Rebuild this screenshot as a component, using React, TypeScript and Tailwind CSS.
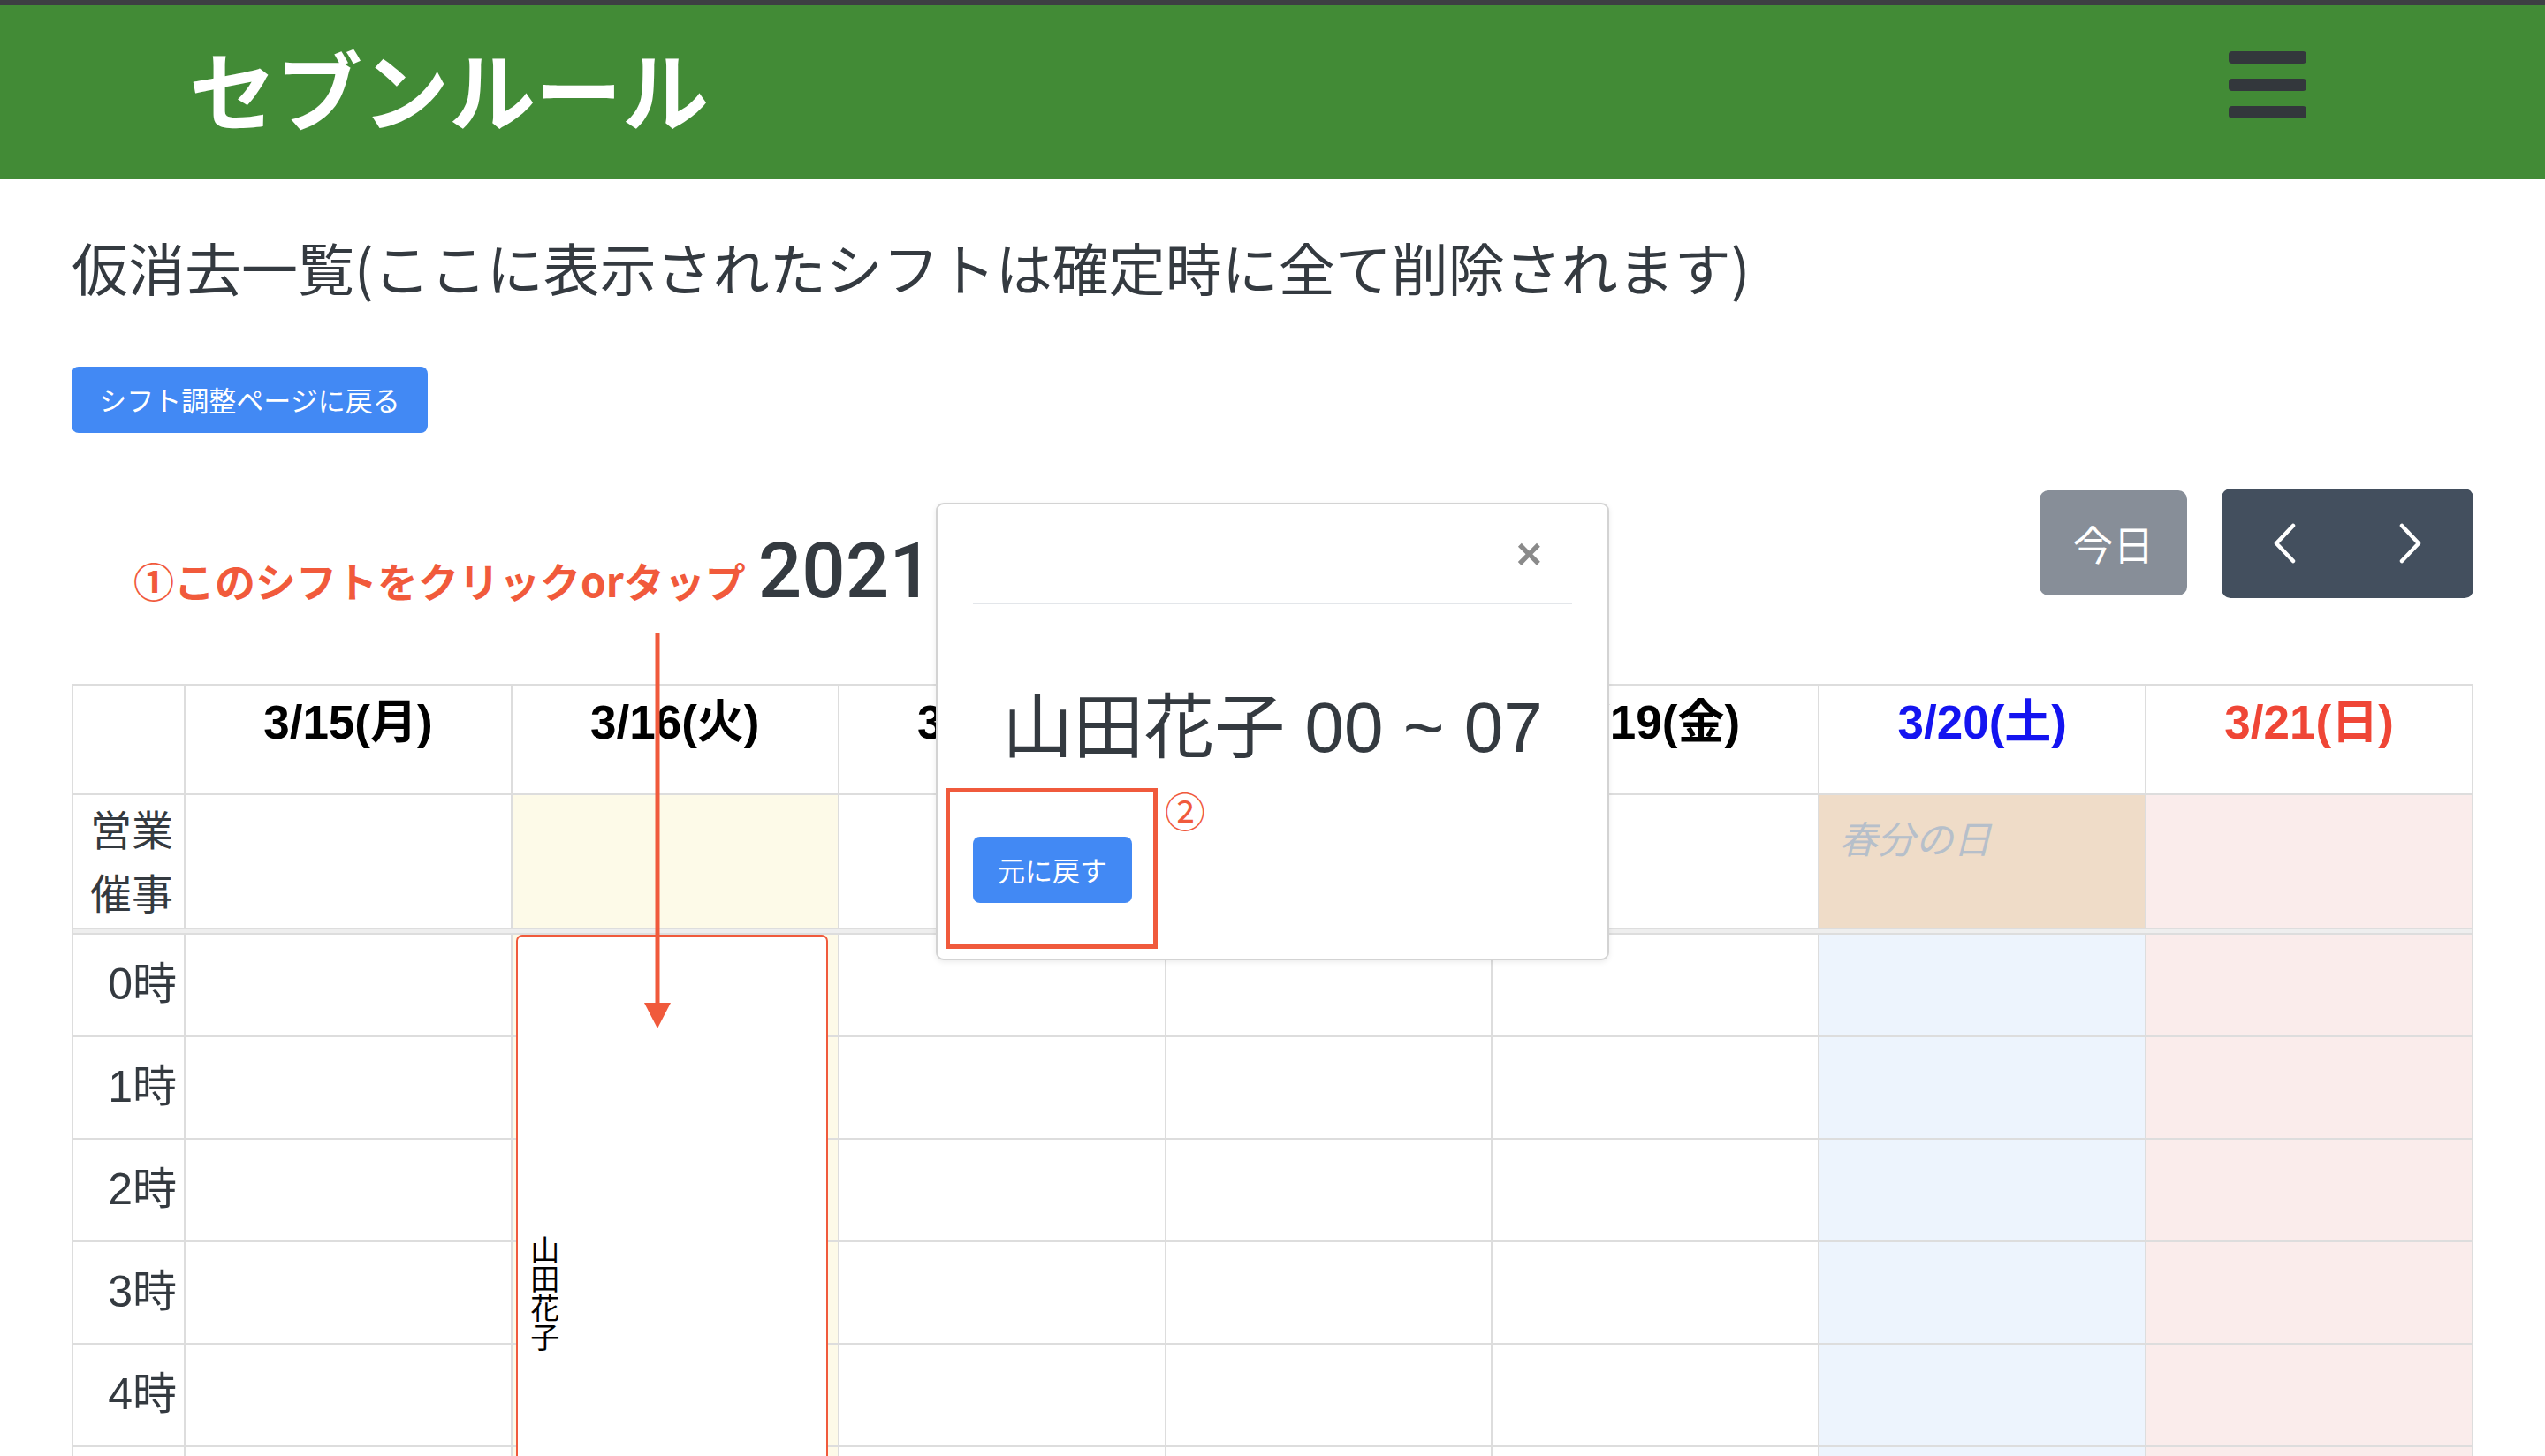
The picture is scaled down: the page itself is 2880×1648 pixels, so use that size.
import React from "react";

// 仮消去一覧 page: header, back button, weekly calendar and the open shift modal
const days = [
  { label: "3/15(月)", head: "text-black", top: "", body: "" },
  { label: "3/16(火)", head: "text-black", top: "bg-[#fdfae8]", body: "bg-[#fdfae8]" },
  { label: "3/17(水)", head: "text-black", top: "", body: "" },
  { label: "3/18(木)", head: "text-black", top: "", body: "" },
  { label: "3/19(金)", head: "text-black", top: "", body: "" },
  { label: "3/20(土)", head: "text-[#1414f0]", top: "bg-[#efdcc8]", body: "bg-[#edf4fd]", holiday: "春分の日" },
  { label: "3/21(日)", head: "text-[#ef4636]", top: "bg-[#faeceb]", body: "bg-[#faeceb]" },
];

const hours = [0, 1, 2, 3, 4, 5, 6, 7];

const cell = "border-r-2 border-b-2 border-[#dddddd]";

function Chevron({ dir }: { dir: "left" | "right" }) {
  return (
    <svg width="30" height="46" viewBox="0 0 30 46" fill="none">
      <path
        d={dir === "left" ? "M25 3 L6 23 L25 43" : "M5 3 L24 23 L5 43"}
        stroke="white"
        strokeWidth="4.5"
        strokeLinecap="round"
        strokeLinejoin="round"
      />
    </svg>
  );
}

export default function App() {
  return (
    <div className="relative min-h-screen bg-white font-['Liberation_Sans','Noto_Sans_CJK_JP',sans-serif] text-[#343a40]">
      {/* top bar + header */}
      <div className="h-[6px] bg-[#3d3e43]" />
      <header className="h-[197px] bg-[#428b36] flex items-center justify-between pl-[214px] pr-[270px]">
        <h1 className="-mt-[14px] text-white font-bold text-[98px] leading-none font-['Noto_Sans_CJK_JP',sans-serif]">
          セブンルール
        </h1>
        <button className="flex flex-col gap-[17px] w-[88px] -mt-[18px]">
          <span className="block h-[14px] rounded-[4px] bg-[#33373c]" />
          <span className="block h-[14px] rounded-[4px] bg-[#33373c]" />
          <span className="block h-[14px] rounded-[4px] bg-[#33373c]" />
        </button>
      </header>

      <main className="px-[81px]">
        <h2 className="mt-[60px] text-[64px] leading-[1.2] font-normal font-['Noto_Sans_CJK_JP',sans-serif]">
          仮消去一覧(ここに表示されたシフトは確定時に全て削除されます)
        </h2>

        <button className="mt-[75px] h-[75px] w-[403px] rounded-[8px] bg-[#4289f4] text-white text-[31px] font-['Noto_Sans_CJK_JP',sans-serif]">
          シフト調整ページに戻る
        </button>

        {/* calendar toolbar */}
        <div className="mt-[63px] h-[124px] flex justify-between items-start">
          <div className="mt-[50px] flex items-baseline gap-[14px] pl-[70px]">
            <span className="text-[46px] font-bold text-[#f15a3b] font-['Noto_Sans_CJK_JP',sans-serif] leading-none">
              ①このシフトをクリックorタップ
            </span>
            <span className="text-[87px] font-medium leading-none font-['Roboto','Noto_Sans_CJK_JP',sans-serif] whitespace-pre">
              2021   年3月
            </span>
          </div>
          <div className="flex items-center gap-[39px] h-full">
            <button className="h-[119px] w-[167px] rounded-[10px] bg-[#878e98] text-white text-[46px] font-['Noto_Sans_CJK_JP',sans-serif]">
              今日
            </button>
            <div className="flex h-[124px] w-[285px] rounded-[10px] bg-[#434f5e] overflow-hidden">
              <button className="flex-1 flex items-center justify-center">
                <Chevron dir="left" />
              </button>
              <button className="flex-1 flex items-center justify-center">
                <Chevron dir="right" />
              </button>
            </div>
          </div>
        </div>

        {/* week grid */}
        <div className="mt-[97px] border-t-2 border-l-2 border-[#dddddd] grid grid-cols-[127px_repeat(7,minmax(0,1fr))]">
          <div className={`${cell} h-[124px]`} />
          {days.map((d) => (
            <div key={d.label} className={`${cell} h-[124px] pt-[15px] text-center`}>
              <span className={`text-[53px] font-bold leading-none ${d.head}`}>{d.label}</span>
            </div>
          ))}

          <div className={`${cell} h-[152px] pl-[19px] pt-[1px] text-[47px] leading-[72px] font-['Noto_Sans_CJK_JP',sans-serif]`}>
            営業
            <br />
            催事
          </div>
          {days.map((d) => (
            <div key={d.label + "-ev"} className={`${cell} h-[152px] ${d.top} pl-[22px] pt-[15px]`}>
              {d.holiday && (
                <span className="text-[43px] italic text-[#b6bfca] leading-[1.5] font-['Noto_Sans_CJK_JP',sans-serif]">
                  {d.holiday}
                </span>
              )}
            </div>
          ))}

          <div className="col-span-8 h-[6px] bg-[#eeeeee] border-r-2 border-b-2 border-[#dddddd]" />

          {hours.map((h) => (
            <React.Fragment key={h}>
              <div className={`${cell} h-[116px] flex items-center justify-end pr-[8px] text-[50px]`}>
                {h}時
              </div>
              {days.map((d, i) => (
                <div key={d.label + h} className={`${cell} h-[116px] relative ${d.body}`}>
                  {h === 0 && i === 1 && (
                    <div className="absolute left-[4px] top-0 z-10 w-[353px] h-[812px] rounded-[7px] border-2 border-[#f05a3c] bg-white flex items-center pl-[14px]">
                      <span className="[writing-mode:vertical-rl] text-[33px] leading-none text-black font-['Noto_Sans_CJK_JP',sans-serif]">
                        山田花子
                      </span>
                    </div>
                  )}
                </div>
              ))}
            </React.Fragment>
          ))}
        </div>
      </main>

      {/* annotation arrow */}
      <svg className="absolute left-[729px] top-[717px] z-20" width="30" height="448" viewBox="0 0 30 448">
        <line x1="15" y1="0" x2="15" y2="420" stroke="#f05a3c" strokeWidth="5" />
        <polygon points="0,418 30,418 15,447" fill="#f05a3c" />
      </svg>

      {/* shift modal */}
      <div className="absolute left-[1059px] top-[569px] z-30 w-[762px] h-[518px] bg-white border-2 border-[#d3d3d3] rounded-[9px] shadow-[0_2px_6px_rgba(0,0,0,0.08)]">
        <div className="mx-[40px] h-[113px] border-b-2 border-[#e3e6ea] flex items-center justify-end pr-[34px]">
          <span className="text-[50px] font-bold text-[#8a8a8a] leading-none">×</span>
        </div>
        <div className="mt-[92px] text-center text-[80px] leading-none">
          <span className="font-['Noto_Sans_CJK_JP',sans-serif]">山田花子</span> 00 ~ 07
        </div>
        <button className="ml-[40px] mt-[83px] h-[75px] w-[180px] rounded-[8px] bg-[#4289f4] text-white text-[31px] font-['Noto_Sans_CJK_JP',sans-serif]">
          元に戻す
        </button>
        <div className="absolute left-[9px] top-[321px] w-[240px] h-[182px] border-[5px] border-[#f05a3c]" />
        <span className="absolute left-[257px] top-[322px] text-[46px] leading-none text-[#f05a3c] font-['Noto_Sans_CJK_JP',sans-serif]">
          ②
        </span>
      </div>
    </div>
  );
}
